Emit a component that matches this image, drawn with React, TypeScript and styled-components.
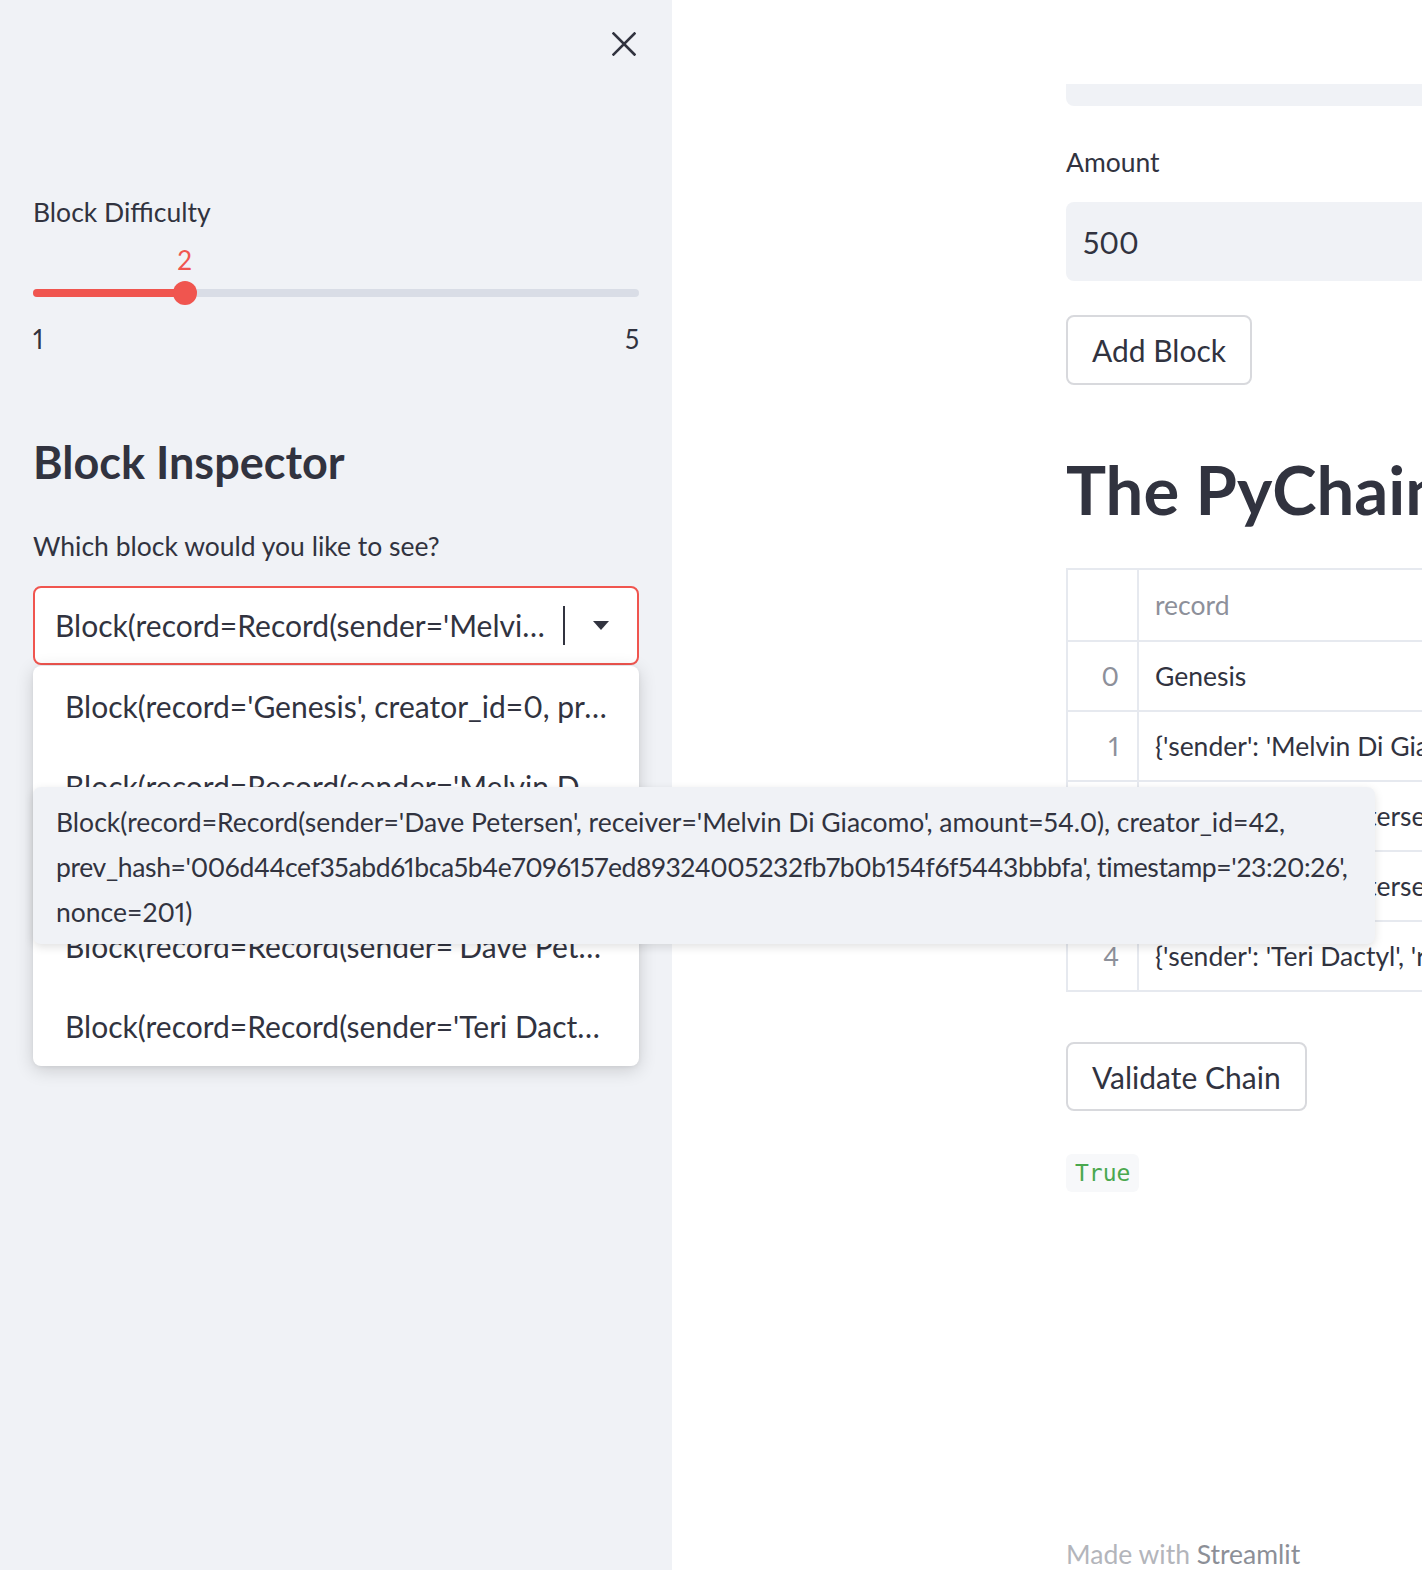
import React from "react";
import styled, { createGlobalStyle } from "styled-components";

const SANS = `Lato, "Noto Sans", sans-serif`;
const MONO = `"DejaVu Sans Mono", "Liberation Mono", monospace`;
const TEXT = "#31333f";
const RED = "#f0554f";
const GRAY_BG = "#f0f2f6";
const BORDER = "#e6e9ef";

const Global = createGlobalStyle`
  html, body { margin: 0; padding: 0; width: 1422px; height: 1570px; overflow: hidden; background: #fff; }
  body { font-family: ${SANS}; color: ${TEXT}; -webkit-font-smoothing: antialiased; font-variant-numeric: proportional-nums; }
  * { box-sizing: border-box; }
`;

const Page = styled.div`
  position: relative;
  display: flex;
  width: 1422px;
  height: 1570px;
  overflow: hidden;
`;

/* ---------- Sidebar ---------- */
const Sidebar = styled.aside`
  flex: 0 0 672px;
  background: ${GRAY_BG};
  padding: 0 33px;
  display: flex;
  flex-direction: column;
`;

const CloseRow = styled.div`
  height: 88px;
  display: flex;
  align-items: center;
  justify-content: flex-end;
  padding-right: 3px;
`;

const CloseButton = styled.button`
  width: 24px;
  height: 24px;
  padding: 0;
  border: none;
  background: transparent;
  display: flex;
`;

const Label = styled.div<{ $mt: number }>`
  margin-top: ${(p) => p.$mt}px;
  font-size: 26.5px;
  line-height: 40px;
  color: ${TEXT};
`;

const SliderWrap = styled.div`
  padding-top: 49px;
`;

const TrackRow = styled.div`
  position: relative;
  height: 24px;
  display: flex;
  align-items: center;
`;

const Track = styled.div`
  position: relative;
  width: 100%;
  height: 8px;
  border-radius: 4px;
  background: #d9dde6;
  overflow: hidden;
`;

const TrackFill = styled.div`
  height: 100%;
  background: ${RED};
`;

const Thumb = styled.div`
  position: absolute;
  top: 0;
  width: 24px;
  height: 24px;
  margin-left: -12px;
  border-radius: 50%;
  background: ${RED};
`;

const ThumbValue = styled.div`
  position: absolute;
  top: -41px;
  width: 40px;
  margin-left: -20px;
  text-align: center;
  font-size: 26px;
  line-height: 40px;
  color: ${RED};
`;

const TickRow = styled.div`
  margin-top: 14px;
  display: flex;
  justify-content: space-between;
  font-size: 26px;
  line-height: 40px;
  color: ${TEXT};
`;

const SideHeading = styled.h2`
  margin: 73px 0 0;
  font-size: 45px;
  font-weight: 700;
  line-height: 60px;
  color: ${TEXT};
`;

const SelectBox = styled.div`
  position: relative;
  margin-top: 20px;
  height: 79px;
  border: 2px solid ${RED};
  border-radius: 8px;
  background: #fff;
  display: flex;
  align-items: center;
  padding: 0 28px 0 20px;
`;

const SelectValue = styled.div`
  width: 500px;
  overflow: hidden;
  white-space: nowrap;
  text-overflow: ellipsis;
  font-size: 30px;
  line-height: 40px;
  color: ${TEXT};
`;

const Caret = styled.div`
  width: 2px;
  height: 39px;
  margin-left: 8px;
  background: ${TEXT};
`;

const Arrow = styled.div`
  margin-left: auto;
  display: flex;
`;

const Menu = styled.ul`
  position: absolute;
  top: calc(100% + 3px);
  left: -2px;
  right: -2px;
  margin: 0;
  padding: 0;
  list-style: none;
  background: #fff;
  border-radius: 8px;
  box-shadow: 0 4px 18px rgba(0, 0, 0, 0.16), 0 1px 4px rgba(0, 0, 0, 0.06);
  z-index: 2;
`;

const MenuItem = styled.li`
  height: 80px;
  padding: 0 32px;
  display: flex;
  align-items: center;
  font-size: 30px;
  color: ${TEXT};
  span {
    display: block;
    width: 100%;
    overflow: hidden;
    white-space: nowrap;
    text-overflow: ellipsis;
  }
`;

const Tooltip = styled.div`
  position: absolute;
  left: 33px;
  top: 787px;
  width: 1342px;
  height: 157px;
  padding: 12.5px 23px 10px;
  background: ${GRAY_BG};
  border-radius: 8px;
  box-shadow: 0 3px 10px rgba(0, 0, 0, 0.12);
  font-size: 26.5px;
  line-height: 45px;
  color: ${TEXT};
  z-index: 5;
  white-space: nowrap;
`;

const TipLine = styled.div<{ $ls?: number }>`
  letter-spacing: ${(p) => p.$ls ?? 0}px;
`;

/* ---------- Main ---------- */
const Main = styled.main`
  flex: 1 1 auto;
  min-width: 0;
  overflow: hidden;
  padding-left: 394px;
`;

const Column = styled.div`
  width: 1472px;
  display: flex;
  flex-direction: column;
  align-items: flex-start;
`;

const InputStub = styled.div`
  margin-top: 84px;
  width: 100%;
  height: 22px;
  background: ${GRAY_BG};
  border-radius: 0 0 8px 8px;
`;

const NumberInput = styled.div`
  margin-top: 20px;
  width: 100%;
  height: 79px;
  padding-left: 17px;
  display: flex;
  align-items: center;
  background: ${GRAY_BG};
  border-radius: 8px;
  font-size: 30px;
  color: ${TEXT};
`;

const Button = styled.button<{ $mt: number; $h: number }>`
  margin-top: ${(p) => p.$mt}px;
  height: ${(p) => p.$h}px;
  padding: 0 24px;
  border: 2px solid #d8d9dd;
  border-radius: 8px;
  background: #fff;
  font-family: ${SANS};
  font-size: 30px;
  color: ${TEXT};
`;

const Title = styled.h1`
  margin: 59px 0 0;
  font-size: 67px;
  font-weight: 700;
  line-height: 90px;
  color: ${TEXT};
  white-space: nowrap;
`;

const Table = styled.div`
  margin-top: 34px;
  width: 100%;
  border-top: 2px solid ${BORDER};
  border-left: 2px solid ${BORDER};
  border-right: 2px solid ${BORDER};
`;

const Row = styled.div<{ $h: number }>`
  display: grid;
  grid-template-columns: 71px 1fr;
  height: ${(p) => p.$h}px;
  border-bottom: 2px solid ${BORDER};
`;

const IndexCell = styled.div`
  border-right: 2px solid ${BORDER};
  padding-right: 18px;
  display: flex;
  align-items: center;
  justify-content: flex-end;
  font-size: 26.5px;
  color: #8d909a;
`;

const Cell = styled.div<{ $head?: boolean }>`
  padding-left: 16px;
  display: flex;
  align-items: center;
  font-size: 26.5px;
  white-space: nowrap;
  overflow: hidden;
  color: ${(p) => (p.$head ? "#8d909a" : TEXT)};
`;

const CodeChip = styled.code`
  margin-top: 43px;
  height: 38px;
  padding: 0 9px;
  display: flex;
  align-items: center;
  background: #f7f8fa;
  border-radius: 6px;
  font-family: ${MONO};
  font-size: 23px;
  color: #4aa84f;
`;

const Footer = styled.div`
  margin-top: 342px;
  font-size: 26.5px;
  line-height: 40px;
  color: #b3b5bb;
  b {
    font-weight: 400;
    color: #8c8f97;
  }
`;

const options = [
  "Block(record='Genesis', creator_id=0, prev_hash='0', timestamp='23:18:02', nonce=0)",
  "Block(record=Record(sender='Melvin Di Giacomo', receiver='Dave Petersen', amount=100.0), creator_id=42)",
  "Block(record=Record(sender='Dave Petersen', receiver='Melvin Di Giacomo', amount=54.0), creator_id=42)",
  "Block(record=Record(sender='Dave Petersen', receiver='Teri Dactyl', amount=20.0), creator_id=42)",
  "Block(record=Record(sender='Teri Dactyl', receiver='Dave Petersen', amount=500.0), creator_id=42)",
];

const rows = [
  "Genesis",
  "{'sender': 'Melvin Di Giacomo', 'receiver': 'Dave Petersen', 'amount': 100.0}",
  "{'sender': 'Dave Petersen', 'receiver': 'Melvin Di Giacomo', 'amount': 54.0}",
  "{'sender': 'Dave Petersen', 'receiver': 'Teri Dactyl', 'amount': 20.0}",
  "{'sender': 'Teri Dactyl', 'receiver': 'Dave Petersen', 'amount': 500.0}",
];

export default function App() {
  const min = 1;
  const max = 5;
  const value = 2;
  const pct = ((value - min) / (max - min)) * 100;

  return (
    <>
      <Global />
      <Page>
        <Sidebar>
          <CloseRow>
            <CloseButton aria-label="Close">
              <svg width="24" height="24" viewBox="0 0 24 24">
                <path d="M1.5 1.5 L22.5 22.5 M22.5 1.5 L1.5 22.5" stroke={TEXT} strokeWidth="2.6" strokeLinecap="square" />
              </svg>
            </CloseButton>
          </CloseRow>

          <Label $mt={104}>Block Difficulty</Label>
          <SliderWrap>
            <TrackRow>
              <Track>
                <TrackFill style={{ width: `${pct}%` }} />
              </Track>
              <Thumb style={{ left: `${pct}%` }} />
              <ThumbValue style={{ left: `${pct}%` }}>{value}</ThumbValue>
            </TrackRow>
            <TickRow>
              <span>{min}</span>
              <span>{max}</span>
            </TickRow>
          </SliderWrap>

          <SideHeading>Block Inspector</SideHeading>
          <Label $mt={33.5}>Which block would you like to see?</Label>

          <SelectBox>
            <SelectValue>{options[1]}</SelectValue>
            <Caret />
            <Arrow>
              <svg width="16" height="9" viewBox="0 0 16 9">
                <path d="M0 0 H16 L8 9 Z" fill={TEXT} />
              </svg>
            </Arrow>
            <Menu>
              {options.map((o) => (
                <MenuItem key={o}>
                  <span>{o}</span>
                </MenuItem>
              ))}
            </Menu>
          </SelectBox>
        </Sidebar>

        <Main>
          <Column>
            <InputStub />
            <Label $mt={36}>Amount</Label>
            <NumberInput>500</NumberInput>
            <Button $mt={34} $h={70}>Add Block</Button>
            <Title>The PyChain Ledger</Title>
            <Table>
              <Row $h={72}>
                <IndexCell />
                <Cell $head>record</Cell>
              </Row>
              {rows.map((r, i) => (
                <Row key={i} $h={70}>
                  <IndexCell>{i}</IndexCell>
                  <Cell>{r}</Cell>
                </Row>
              ))}
            </Table>
            <Button $mt={50} $h={69}>Validate Chain</Button>
            <CodeChip>True</CodeChip>
            <Footer>
              Made with <b>Streamlit</b>
            </Footer>
          </Column>
        </Main>

        <Tooltip role="tooltip">
          <TipLine>
            Block(record=Record(sender='Dave Petersen', receiver='Melvin Di Giacomo', amount=54.0), creator_id=42,
          </TipLine>
          <TipLine $ls={-0.35}>
            prev_hash='006d44cef35abd61bca5b4e7096157ed89324005232fb7b0b154f6f5443bbbfa', timestamp='23:20:26',
          </TipLine>
          <TipLine>nonce=201)</TipLine>
        </Tooltip>
      </Page>
    </>
  );
}
